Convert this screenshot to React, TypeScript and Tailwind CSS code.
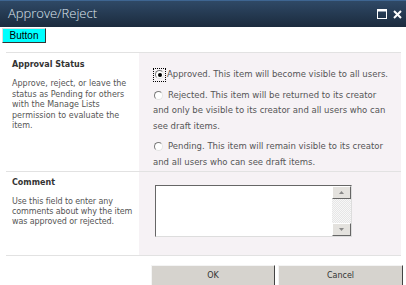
import React, { useState } from 'react';

const font = { fontFamily: 'Tahoma, "DejaVu Sans", Verdana, sans-serif' };

const options = [
  { key: 'approved', text: 'Approved. This item will become visible to all users.' },
  {
    key: 'rejected',
    text: 'Rejected. This item will be returned to its creator and only be visible to its creator and all users who can see draft items.',
  },
  {
    key: 'pending',
    text: 'Pending. This item will remain visible to its creator and all users who can see draft items.',
  },
];

const Radio = ({ checked }: { checked: boolean }) => (
  <span className="inline-flex h-[9px] w-[9px] items-center justify-center rounded-full border border-t-[#7a7a7a] border-l-[#7a7a7a] border-r-[#e4e4e4] border-b-[#e4e4e4] bg-white">
    {checked && <span className="h-[4px] w-[4px] rounded-full bg-black" />}
  </span>
);

const App = () => {
  const [status, setStatus] = useState('approved');

  return (
    <div className="h-[285px] w-[406px] overflow-hidden bg-white text-[#444]" style={font}>
      {/* title bar */}
      <div className="flex h-[27px] items-center justify-between border-t border-[#3e6591] bg-gradient-to-b from-[#2f4966] to-[#1b2b3e] pl-[8px] pr-[4px]">
        <span className="text-[13px] font-light text-[#dfe6ee]" style={{ fontFamily: '"Open Sans", sans-serif' }}>
          Approve/Reject
        </span>
        <div className="flex items-center gap-[6px]">
          <svg width="10" height="10" viewBox="0 0 10 10">
            <rect x="0.5" y="0.5" width="9" height="9" fill="none" stroke="#fff" />
            <rect x="0.5" y="0.5" width="9" height="2" fill="#fff" />
          </svg>
          <svg width="9" height="9" viewBox="0 0 9 9">
            <path d="M1 1 L8 8 M8 1 L1 8" stroke="#fff" strokeWidth="2" />
          </svg>
        </div>
      </div>

      <div className="flex pl-[2px] pt-[1px]">
        <button className="h-[15px] w-[44px] border border-t-[#ddd] border-l-[#ddd] border-r-[#333] border-b-[#333] bg-[#00ffff] text-[10px] leading-none text-black" style={{ fontFamily: '"Liberation Sans", Arial, sans-serif' }}>
          Button
        </button>
      </div>

      {/* form */}
      <div className="ml-[6px] mr-[5px] mt-[9px] border-t border-[#e2e2e2]">
        <div className="flex h-[118px]">
          <div className="w-[133px] pl-[6px] pt-[6px]">
            <div className="text-[8px] font-bold leading-[11px] text-[#333]">Approval Status</div>
            <div className="mt-[9px] text-[8px] leading-[10.5px] text-[#555]">
              Approve, reject, or leave the status as Pending for others with the Manage Lists permission to evaluate the item.
            </div>
          </div>
          <div className="flex-1 bg-[#f6f2f5] pl-[14px] pr-[9px] pt-[14px] text-[8.5px] leading-[15.5px] text-[#555]">
            {options.map((o, i) => (
              <div key={o.key} className={i === 0 ? '' : 'mt-[5px]'} onClick={() => setStatus(o.key)}>
                <span
                  className={
                    i === 0
                      ? 'mr-[1px] inline-flex h-[14px] w-[13px] items-center justify-center border border-dotted border-black align-middle'
                      : 'mr-[4px] inline-flex w-[11px] justify-center align-middle'
                  }
                >
                  <Radio checked={status === o.key} />
                </span>
                {o.text}
              </div>
            ))}
          </div>
        </div>

        <div className="flex h-[84px] border-t border-[#e2e2e2]">
          <div className="w-[133px] pl-[6px] pt-[5px]">
            <div className="text-[8px] font-bold leading-[11px] text-[#333]">Comment</div>
            <div className="mt-[9px] text-[8px] leading-[10px] tracking-[-0.1px] text-[#555]">
              Use this field to enter any comments about why the item was approved or rejected.
            </div>
          </div>
          <div className="flex-1 bg-[#f6f2f5] pl-[16px] pt-[13px]">
            <div className="flex h-[52px] w-[197px] border border-t-[#666] border-l-[#666] border-r-[#ddd] border-b-[#ddd] bg-white">
              <div className="flex-1" />
              <div className="flex w-[19px] flex-col bg-[repeating-conic-gradient(#e6e6e6_0%_25%,#f7f7f7_0%_50%)] bg-[length:2px_2px]">
                <div className="flex h-[13px] items-center justify-center border border-t-white border-l-white border-r-[#666] border-b-[#666] bg-[#e4e2de]">
                  <svg width="5" height="3" viewBox="0 0 5 3"><path d="M2.5 0 L5 3 L0 3 Z" fill="#888" /></svg>
                </div>
                <div className="flex-1" />
                <div className="flex h-[13px] items-center justify-center border border-t-white border-l-white border-r-[#666] border-b-[#666] bg-[#e4e2de]">
                  <svg width="5" height="3" viewBox="0 0 5 3"><path d="M0 0 L5 0 L2.5 3 Z" fill="#888" /></svg>
                </div>
              </div>
            </div>
          </div>
        </div>

        <div className="border-t border-[#e2e2e2]" />
      </div>

      <div className="flex justify-end gap-[3px] pr-[3px] pt-[9px]">
        <button className="h-[22px] w-[124px] border border-t-[#f4f4f4] border-l-[#f4f4f4] border-r-[#444] border-b-[#444] bg-[#d6d3ce] text-[8px] text-[#333]">
          OK
        </button>
        <button className="h-[22px] w-[125px] border border-t-[#f4f4f4] border-l-[#f4f4f4] border-r-[#444] border-b-[#444] bg-[#d6d3ce] text-[8px] text-[#333]">
          Cancel
        </button>
      </div>
    </div>
  );
};

export default App;
